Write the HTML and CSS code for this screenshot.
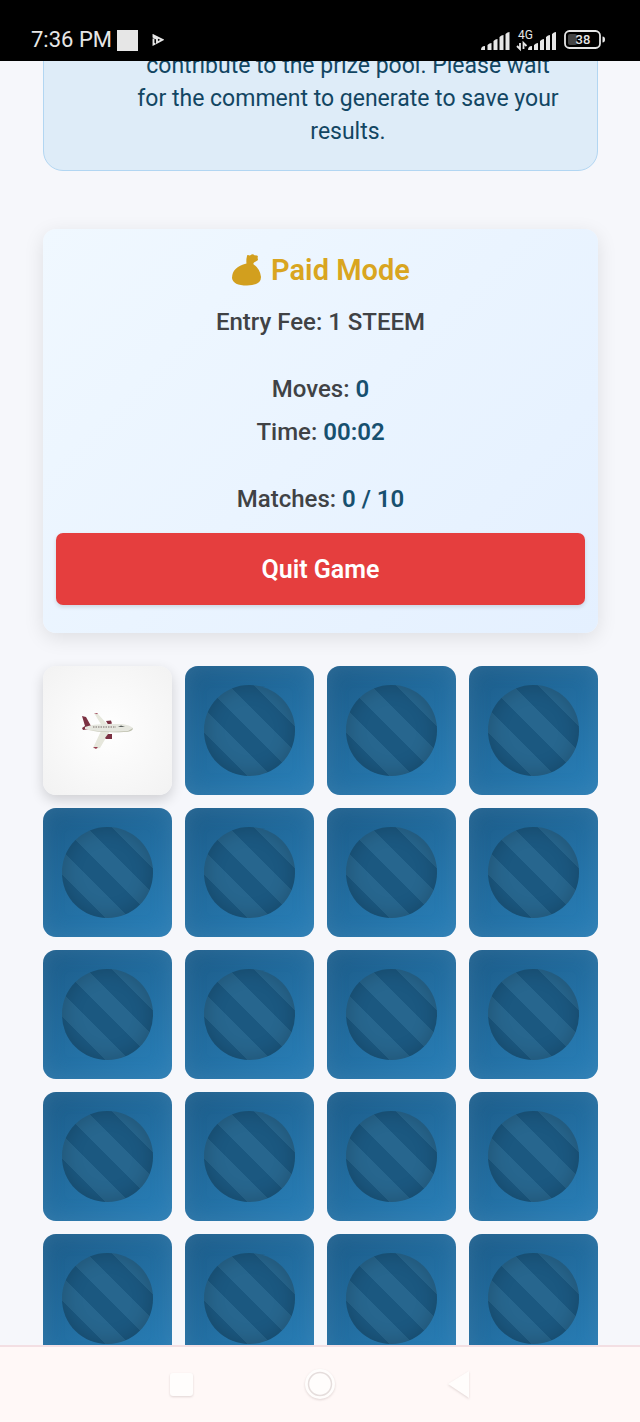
FILE: index.html
```
<!DOCTYPE html>
<html lang="en">
<head>
<meta charset="utf-8">
<meta name="viewport" content="width=device-width, initial-scale=1">
<title>Memory Game</title>
<link rel="stylesheet" href="styles.css">
</head>
<body>
<div class="screen">
  <header class="status">
    <div class="status-group">
      <span class="clock">7:36 PM</span>
      <span class="square"></span>
      <svg class="play" width="12" height="12" viewBox="0 0 12 12"><path d="M1.500 1.300 10.500 5.800 5 8.600V4.800L1.500 3ZM1.500 4.500V10.500L3.500 9.500" fill="none" stroke="#e6e6e6" stroke-width="1.900"/></svg>
    </div>
    <div class="status-group">
      <svg width="78" height="24" viewBox="0 0 78 24" fill="#e6e6e6">
        <path d="M0 22q0-4 4-4v4zM6.500 17q2-2 4-2v7h-4zM12.500 13q2-2 4-2v11h-4zM18.500 9q2-2 4-2v15h-4zM24.500 6q2-2 4-2v18h-4z"/>
        <path d="M47 22q0-4 4-4v4zM53 17q2-2 4-2v7h-4zM59 13q2-2 4-2v11h-4zM65 9q2-2 4-2v15h-4zM71 6q2-2 4-2v18h-4z"/>
        <path d="M39 15v6l-3-3M42.500 21v-6l3 3" fill="none" stroke="#e6e6e6" stroke-width="1.800"/>
        <text x="37" y="11" class="network">4G</text>
      </svg>
      <svg width="42" height="20" viewBox="0 0 42 20">
        <rect x="1" y="1" width="35" height="17" rx="4.500" fill="none" stroke="#e6e6e6" stroke-width="1.800"/>
        <rect x="4" y="4" width="9" height="11" rx="2" fill="#444"/>
        <path d="M38.500 6.500q2.500 0 2.500 3t-2.500 3z" fill="#e6e6e6"/>
        <text x="19" y="14" class="battery">38</text>
      </svg>
    </div>
  </header>

  <main class="page">
    <section class="notice">
      <p>contribute to the prize pool. Please wait for the comment to generate to save your results.</p>
    </section>

    <section class="panel">
      <h2 class="mode">
        <svg width="31" height="34" viewBox="0 0 31 34"><path d="M16 3q0-1.500 2-.8 1.500.6 2.500-.6 1.500-1.200 3 .7l2.500.2q1.500.8.5 2.500 1.200 2-.5 2.800l-3 1.700-.8 1.500q7 5 7.800 13Q30 32.500 16 32.500T1 25Q1 14 15.500 10.500Q15 7 16 3Z" fill="#d29f1e"/></svg>
        Paid Mode
      </h2>
      <p class="stat fee">Entry Fee: 1 STEEM</p>
      <p class="stat">Moves: <b>0</b></p>
      <p class="stat time">Time: <b>00:02</b></p>
      <p class="stat">Matches: <b>0 / 10</b></p>
      <button class="quit" type="button">Quit Game</button>
    </section>

    <section class="board">
      <button class="card open" type="button" aria-label="Airplane">
        <svg width="52" height="38" viewBox="0 0 52 38">
          <path d="M12 1l4 1 9 10-2 2h-3zM19 19h9L18 36l-5 1-2-1z" fill="#e6e7dc"/>
          <path d="M0 4l4 1 5 9-1 3-7 1-1-2 3-2z" fill="#7b3142"/>
          <path d="M24 9l5-.5 1 3-4 1zM23 26l3-4h4v5h-6z" fill="#7b3142"/>
          <path d="M12 1l4 .3-1 1zM11 35h5l-2 2z" fill="#983c50"/>
          <path d="M3 15Q10 12 26 12H40q8 1 11 4-1 4-9 4-22 1-39-3z" fill="#e6e7df"/>
          <path d="M6 18q20 3 40 1l5-3q0 4-9 4-22 1-36-2z" fill="#bec0ae"/>
          <path d="M11 15H34" stroke="#7b716e" stroke-width="1.200" stroke-dasharray="1.500 1"/>
          <path d="M36 15l3-1.500 4 1.500z" fill="#5b615e"/>
        </svg>
      </button>
      <button class="card" type="button" aria-label="Card 2"></button>
      <button class="card" type="button" aria-label="Card 3"></button>
      <button class="card" type="button" aria-label="Card 4"></button>
      <button class="card" type="button" aria-label="Card 5"></button>
      <button class="card" type="button" aria-label="Card 6"></button>
      <button class="card" type="button" aria-label="Card 7"></button>
      <button class="card" type="button" aria-label="Card 8"></button>
      <button class="card" type="button" aria-label="Card 9"></button>
      <button class="card" type="button" aria-label="Card 10"></button>
      <button class="card" type="button" aria-label="Card 11"></button>
      <button class="card" type="button" aria-label="Card 12"></button>
      <button class="card" type="button" aria-label="Card 13"></button>
      <button class="card" type="button" aria-label="Card 14"></button>
      <button class="card" type="button" aria-label="Card 15"></button>
      <button class="card" type="button" aria-label="Card 16"></button>
      <button class="card" type="button" aria-label="Card 17"></button>
      <button class="card" type="button" aria-label="Card 18"></button>
      <button class="card" type="button" aria-label="Card 19"></button>
      <button class="card" type="button" aria-label="Card 20"></button>
    </section>
  </main>

  <nav class="system-nav">
    <button type="button" aria-label="Recent apps"><svg width="34" height="34" viewBox="0 0 34 34"><rect x="6" y="5" width="23" height="23" rx="3"/></svg></button>
    <button type="button" aria-label="Home"><svg width="34" height="34" viewBox="0 0 34 34"><circle cx="17" cy="16" r="15"/><circle cx="17" cy="16" r="11.500" class="ring"/><circle cx="17" cy="15" r="9"/></svg></button>
    <button type="button" aria-label="Back"><svg width="34" height="34" viewBox="0 0 34 34"><path d="M6 16 27 3v27z"/></svg></button>
  </nav>
</div>
</body>
</html>
```
FILE: styles.css
```
* {
  box-sizing: border-box;
}

body {
  margin: 0;
  font-family: Roboto, "Liberation Sans", sans-serif;
  background: #f6f7fb;
}

h2,
p {
  margin: 0;
}

button {
  border: 0;
  padding: 0;
  font-family: inherit;
}

.screen {
  display: flex;
  flex-direction: column;
  height: 100vh;
}

.status {
  display: flex;
  flex: none;
  justify-content: space-between;
  align-items: flex-end;
  height: 61px;
  padding: 0 34px 9px 31px;
  background: #000;
  color: #e6e6e6;
}

.status-group {
  display: flex;
  align-items: center;
  gap: 5px;
}

.clock {
  font-size: 22px;
  line-height: 24px;
}

.square {
  width: 21px;
  height: 21px;
  background: #e6e6e6;
}

.play {
  margin-left: 9px;
}

.network,
.battery {
  fill: #e6e6e6;
}

.network {
  font-size: 12px;
}

.battery {
  font-size: 13px;
  font-weight: 500;
  text-anchor: middle;
}

.page {
  flex: 1;
  min-height: 0;
  overflow: hidden;
  padding: 0 42px 0 43px;
}

.notice {
  margin-top: -32px;
  padding: 19px 31px 22px 86px;
  border: 1px solid #b2d6f2;
  border-radius: 20px;
  background: #deecf8;
  color: #124663;
  font-size: 23px;
  line-height: 33px;
  text-align: center;
}

.panel {
  margin-top: 58px;
  padding: 24px 13px 28px;
  border-radius: 13px;
  background: linear-gradient(135deg, #f0f8ff, #e4f0ff);
  box-shadow: 0 5px 20px rgba(0, 0, 0, 0.1);
  text-align: center;
}

.mode {
  display: flex;
  justify-content: center;
  align-items: center;
  gap: 9px;
  color: #d9a520;
  font-size: 29px;
  font-weight: 600;
  line-height: 34px;
}

.stat {
  margin-top: 24px;
  color: #404245;
  font-size: 24px;
  font-weight: 500;
  line-height: 43px;
}

.stat b {
  color: #17506f;
  font-weight: 600;
}

.fee {
  margin-top: 14px;
}

.time {
  margin-top: 0;
}

.quit {
  display: block;
  width: 100%;
  height: 72px;
  margin-top: 12px;
  border-radius: 7px;
  background: #e53e3e;
  box-shadow: 0 2px 4px rgba(0, 0, 0, 0.12);
  color: #fff;
  font-size: 25px;
  font-weight: 600;
}

.board {
  display: grid;
  grid-template-columns: repeat(4, 1fr);
  gap: 13px;
  margin-top: 33px;
}

.card {
  display: grid;
  place-items: center;
  aspect-ratio: 1;
  border-radius: 13px;
  background: linear-gradient(145deg, #1c5c89, #2980b9);
  box-shadow: inset 0 0 20px rgba(80, 135, 175, 0.4);
}

.card:not(.open)::before {
  content: "";
  width: 70%;
  aspect-ratio: 1;
  border-radius: 50%;
  background: repeating-linear-gradient(45deg, #27668e 0 14px, #1b5880 14px 31px, #27668e 31px 34px);
  box-shadow: inset 0 0 20px rgba(0, 0, 0, 0.2);
}

.card.open {
  background: radial-gradient(circle, #fff, #f2f2f2);
  box-shadow: 0 5px 13px rgba(0, 0, 0, 0.16);
}

.system-nav {
  display: flex;
  flex: none;
  justify-content: center;
  align-items: center;
  gap: 105px;
  height: 77px;
  border-top: 2px solid #f3dfe3;
  background: #fff8f7;
}

.system-nav button {
  display: flex;
  background: none;
}

.system-nav svg {
  fill: #fffdfc;
  filter: drop-shadow(0 1px 1px rgba(100, 70, 70, 0.2));
}

.system-nav .ring {
  fill: none;
  stroke: #e5dddc;
  stroke-width: 1.5;
}
```
